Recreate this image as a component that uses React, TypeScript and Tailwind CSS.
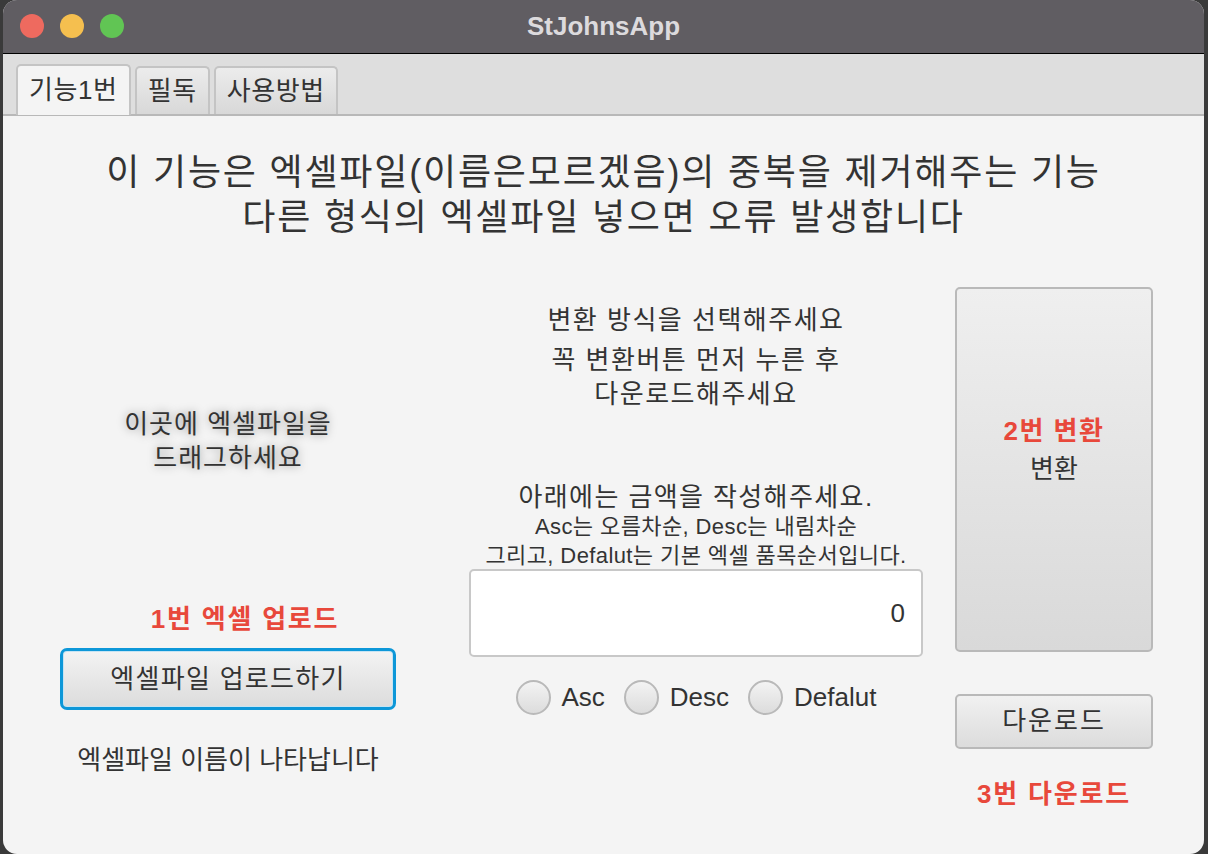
import React from "react";

const font = { fontFamily: '"Liberation Sans", "Noto Sans CJK KR", sans-serif' };

function Tab({ label, active }: { label: string; active?: boolean }) {
  return (
    <div
      className={
        active
          ? "relative z-10 -mb-px flex h-[51px] items-center rounded-t-[5px] border-2 border-b-0 border-[#c4c4c4] bg-[#f4f4f4] px-[11px] text-[26px] tracking-[0.6px] text-[#333]"
          : "flex h-[48px] items-center rounded-t-[5px] border-2 border-b-0 border-[#c4c4c4] bg-gradient-to-b from-[#ececec] to-[#d8d8d8] px-[11px] text-[26px] tracking-[0.6px] text-[#333]"
      }
    >
      {label}
    </div>
  );
}

function Radio({ label }: { label: string }) {
  return (
    <label className="flex items-center gap-[11px]">
      <span className="h-[35px] w-[35px] rounded-full border-2 border-[#b9b9b9] bg-gradient-to-b from-[#f3f3f3] to-[#dcdcdc]" />
      <span className="text-[26px] text-[#333]">{label}</span>
    </label>
  );
}

export default function App() {
  return (
    <div className="h-[854px] w-[1208px] overflow-hidden bg-[#3a3a3a] pl-[3px] pr-[4px]" style={font}>
      <div className="flex h-[854px] flex-col overflow-hidden rounded-[14px] bg-[#f4f4f4]">
        {/* title bar */}
        <div className="relative flex h-[54px] shrink-0 items-center justify-center border-b border-black bg-[#605d62]">
          <div className="absolute left-[17px] top-[14px] flex gap-[16px]">
            <span className="h-[24px] w-[24px] rounded-full bg-[#ee6a5f]" />
            <span className="h-[24px] w-[24px] rounded-full bg-[#f5bf4f]" />
            <span className="h-[24px] w-[24px] rounded-full bg-[#61c554]" />
          </div>
          <span className="text-[26px] font-bold text-[#dcdadd]">StJohnsApp</span>
        </div>

        {/* tab header */}
        <div className="flex h-[62px] shrink-0 items-end gap-[4px] border-b-2 border-[#b8b8b8] bg-[#dedede] pl-[13px]">
          <Tab label="기능1번" active />
          <Tab label="필독" />
          <Tab label="사용방법" />
        </div>

        {/* content */}
        <div className="flex-1 pt-[34px]">
          <div className="text-center text-[36px] leading-[45px] tracking-[1.8px] text-[#333]">
            <p>이 기능은 엑셀파일(이름은모르겠음)의 중복을 제거해주는 기능</p>
            <p>다른 형식의 엑셀파일 넣으면 오류 발생합니다</p>
          </div>

          <div className="mt-[47px] flex pl-[57px]">
            {/* left column */}
            <div className="flex w-[336px] flex-col items-center text-[#333]">
              <div className="mt-[120px] text-center text-[26px] leading-[34px] tracking-[1px] [text-shadow:0_0_10px_rgba(0,0,0,0.4)]">
                <p>이곳에 엑셀파일을</p>
                <p>드래그하세요</p>
              </div>
              <p className="ml-[34px] mt-[128px] text-[26px] font-bold leading-[32px] tracking-[1.8px] text-[#e8483b]">1번 엑셀 업로드</p>
              <button className="mt-[13px] h-[62px] w-[336px] rounded-[7px] border-[3px] border-[#0d97d8] bg-gradient-to-b from-[#f3f3f3] to-[#dcdcdc] text-[26px] tracking-[1.3px] text-[#333] shadow-[inset_0_0_0_1px_#c6e4f3]">
                엑셀파일 업로드하기
              </button>
              <p className="mt-[35px] text-[26px] leading-[30px]">엑셀파일 이름이 나타납니다</p>
            </div>

            {/* middle column */}
            <div className="ml-[73px] flex w-[454px] flex-col items-center text-[#333]">
              <p className="mt-[16px] text-[26px] leading-[34px] tracking-[1.5px]">변환 방식을 선택해주세요</p>
              <div className="mt-[6px] text-center text-[26px] leading-[34px] tracking-[1.5px]">
                <p>꼭 변환버튼 먼저 누른 후</p>
                <p>다운로드해주세요</p>
              </div>
              <p className="mt-[71px] text-[26px] leading-[30px] tracking-[1.4px]">아래에는 금액을 작성해주세요.</p>
              <div className="text-center text-[22px] leading-[29px] tracking-[0.4px]">
                <p>Asc는 오름차순, Desc는 내림차순</p>
                <p>그리고, Defalut는 기본 엑셀 품목순서입니다.</p>
              </div>
              <div className="mt-[-1px] flex h-[88px] w-[454px] items-center justify-end rounded-[5px] border-2 border-[#c8c8c8] bg-white px-[16px] text-[26px]">
                0
              </div>
              <div className="mt-[21px] flex items-center gap-[19px]">
                <Radio label="Asc" />
                <Radio label="Desc" />
                <Radio label="Defalut" />
              </div>
            </div>

            {/* right column */}
            <div className="ml-[32px] flex w-[198px] flex-col items-center">
              <button className="flex h-[365px] w-[198px] flex-col items-center justify-center rounded-[5px] border-2 border-[#b9b9b9] bg-gradient-to-b from-[#efefef] to-[#d9d9d9] pb-[40px]">
                <span className="text-[26px] font-bold leading-[38px] tracking-[1.5px] text-[#e8483b]">2번 변환</span>
                <span className="text-[26px] leading-[38px] text-[#333]">변환</span>
              </button>
              <button className="mt-[42px] h-[55px] w-[198px] rounded-[5px] border-2 border-[#b9b9b9] bg-gradient-to-b from-[#f1f1f1] to-[#dcdcdc] text-[26px] tracking-[2px] text-[#333]">
                다운로드
              </button>
              <p className="mt-[28px] text-[26px] font-bold leading-[34px] tracking-[1.8px] text-[#e8483b]">3번 다운로드</p>
            </div>
          </div>
        </div>
      </div>
    </div>
  );
}
